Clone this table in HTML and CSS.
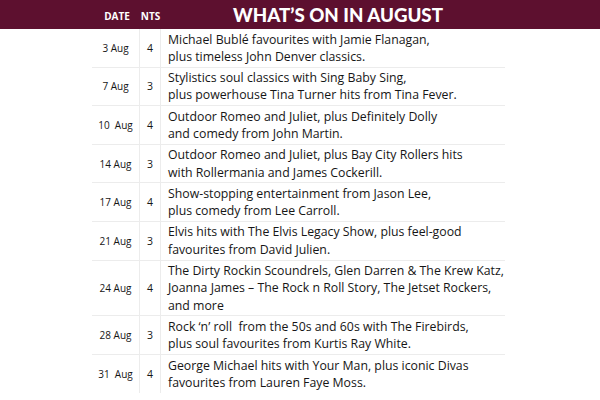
FILE: index.html
```html
<!DOCTYPE html>
<html>
<head>
<meta charset="utf-8">
<link rel="stylesheet" href="styles.css">
</head>
<body>
<div class="header">
  <div class="h-date">DATE</div>
  <div class="h-nts">NTS</div>
  <div class="h-title">WHAT’S ON IN AUGUST</div>
</div>
<div class="table">
  <div class="row"><div class="date">3 Aug</div><div class="nts">4</div><div class="desc">Michael Bublé favourites with Jamie Flanagan,<br>plus timeless John Denver classics.</div></div>
  <div class="row"><div class="date">7 Aug</div><div class="nts">3</div><div class="desc">Stylistics soul classics with Sing Baby Sing,<br>plus powerhouse Tina Turner hits from Tina Fever.</div></div>
  <div class="row"><div class="date">10&nbsp; Aug</div><div class="nts">4</div><div class="desc">Outdoor Romeo and Juliet, plus Definitely Dolly<br>and comedy from John Martin.</div></div>
  <div class="row"><div class="date">14 Aug</div><div class="nts">3</div><div class="desc">Outdoor Romeo and Juliet, plus Bay City Rollers hits<br>with Rollermania and James Cockerill.</div></div>
  <div class="row"><div class="date">17 Aug</div><div class="nts">4</div><div class="desc">Show-stopping entertainment from Jason Lee,<br>plus comedy from Lee Carroll.</div></div>
  <div class="row"><div class="date">21 Aug</div><div class="nts">3</div><div class="desc">Elvis hits with The Elvis Legacy Show, plus feel-good<br>favourites from David Julien.</div></div>
  <div class="row"><div class="date">24 Aug</div><div class="nts">4</div><div class="desc">The Dirty Rockin Scoundrels, Glen Darren &amp; The Krew Katz,<br>Joanna James – The Rock n Roll Story, The Jetset Rockers,<br>and more</div></div>
  <div class="row"><div class="date">28 Aug</div><div class="nts">3</div><div class="desc">Rock ‘n’ roll&nbsp; from the 50s and 60s with The Firebirds,<br>plus soul favourites from Kurtis Ray White.</div></div>
  <div class="row last"><div class="date">31&nbsp; Aug</div><div class="nts">4</div><div class="desc">George Michael hits with Your Man, plus iconic Divas<br>favourites from Lauren Faye Moss.</div></div>
</div>
</body>
</html>
```
FILE: styles.css
```css
html, body {
  margin: 0;
  padding: 0;
  background: #ffffff;
}
body {
  width: 600px;
  height: 400px;
  overflow: hidden;
  font-family: "Open Sans", "Noto Sans", sans-serif;
  color: #161616;
}
.header {
  height: 29px;
  background: #5d102f;
  color: #ffffff;
  display: grid;
  grid-template-columns: 48px 21px 1fr;
  padding-left: 92px;
  align-items: center;
}
.h-date, .h-nts {
  font-size: 10px;
  font-weight: 700;
  text-align: center;
  padding-top: 3px;
}
.h-date { padding-left: 2px; }
.h-title {
  font-family: "Lato", sans-serif;
  font-weight: 900;
  font-size: 18.7px;
  padding-left: 72px;
}
.table {
  margin-left: 92px;
  width: 413px;
}
.row {
  display: grid;
  grid-template-columns: 48px 21px 1fr;
  border-bottom: 1px solid #ececec;
}
.row.last { border-bottom: none; }
.date, .nts {
  display: flex;
  align-items: center;
  justify-content: center;
  font-size: 10px;
  border-right: 1px solid #ececec;
}
.nts { font-size: 10.5px; }
.desc {
  padding: 1.5px 0 1.5px 7px;
  font-size: 12.3px;
  line-height: 17.3px;
  white-space: nowrap;
}
```
